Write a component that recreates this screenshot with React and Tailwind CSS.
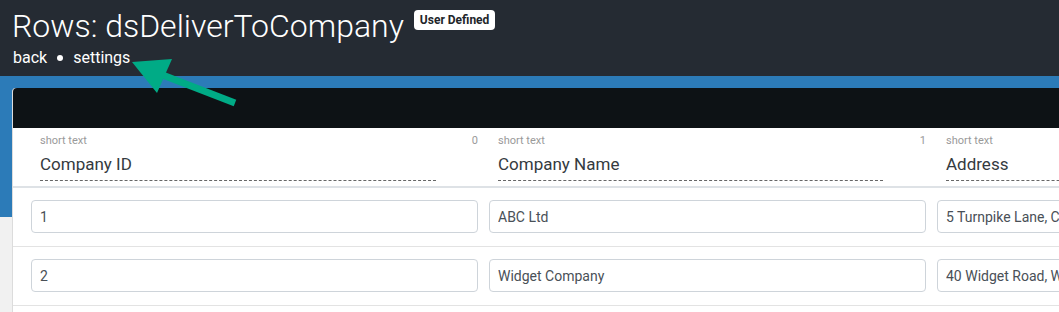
const COLUMNS = [
  { type: "short text", label: "Company ID", index: 0, width: "w-[447px]", line: "w-[396px]" },
  { type: "short text", label: "Company Name", index: 1, width: "w-[437px]", line: "w-[385px]" },
  { type: "short text", label: "Address", index: 2, width: "w-[437px]", line: "w-[385px]" },
];

const ROWS = [
  ["1", "ABC Ltd", "5 Turnpike Lane, Cambridge"],
  ["2", "Widget Company", "40 Widget Road, Westfield"],
];

function Arrow() {
  return (
    <svg
      className="absolute left-0 top-0 pointer-events-none"
      width="260"
      height="120"
      viewBox="0 0 260 120"
    >
      <line x1="235" y1="103" x2="160" y2="74" stroke="#00ab86" strokeWidth="7" />
      <polygon points="132,62 172,59 157,93" fill="#00ab86" />
    </svg>
  );
}

export default function App() {
  return (
    <div className="relative w-[1059px] h-[312px] overflow-hidden bg-[#f1f1f1] font-['Roboto',sans-serif]">
      <header className="h-[76px] bg-[#252b33] pl-[12px] pt-[8px]">
        <div className="flex items-start gap-[10px]">
          <h1 className="text-[32px] font-light leading-[36px] text-white">Rows: dsDeliverToCompany</h1>
          <span className="mt-[2px] rounded-[4px] bg-white px-[6px] py-[2px] text-[12px] font-bold leading-[16px] text-[#212529]">
            User Defined
          </span>
        </div>
        <nav className="mt-[4px] flex items-center text-[16px] leading-[20px] text-white">
          <span className="pl-[1px]">back</span>
          <span className="mx-[10px] h-[6px] w-[6px] rounded-full bg-white" />
          <span>settings</span>
        </nav>
      </header>

      <div className="bg-[linear-gradient(#2c7bb8_141px,#f1f1f1_141px)] pl-[12px] pt-[12px]">
        <div className="h-[260px] w-[1100px] rounded-tl-[4px] border-l border-[#dcdcdc] bg-white">
          <div className="h-[40px] rounded-tl-[4px] bg-[#0d1215]" />

          <div className="flex gap-[11px] border-b-2 border-[#dee2e6] pl-[18px] pt-[6px] pb-[5px]">
            {COLUMNS.map((col) => (
              <div key={col.label} className={`${col.width} shrink-0`}>
                <div className="flex justify-between pl-[9px] text-[11px] leading-[14px] text-[#9a9a9a]">
                  <span>{col.type}</span>
                  <span>{col.index === 2 ? "" : col.index}</span>
                </div>
                <div
                  className={`${col.line} ml-[9px] mt-[5px] border-b border-dashed border-[#666] pb-[5px] text-[17px] leading-[22px] text-[#343a40]`}
                >
                  {col.label}
                </div>
              </div>
            ))}
          </div>

          {ROWS.map((row) => (
            <div key={row[0]} className="flex gap-[11px] border-b border-[#e3e3e3] pl-[18px] pt-[12px] pb-[13px]">
              {row.map((value, i) => (
                <div key={i} className={`${COLUMNS[i].width} shrink-0`}>
                  <input
                    readOnly
                    value={value}
                    className="h-[33px] w-full rounded-[4px] border border-[#ced4da] bg-white px-[8px] text-[14px] text-[#495057] outline-none"
                  />
                </div>
              ))}
            </div>
          ))}
        </div>
      </div>

      <Arrow />
    </div>
  );
}
